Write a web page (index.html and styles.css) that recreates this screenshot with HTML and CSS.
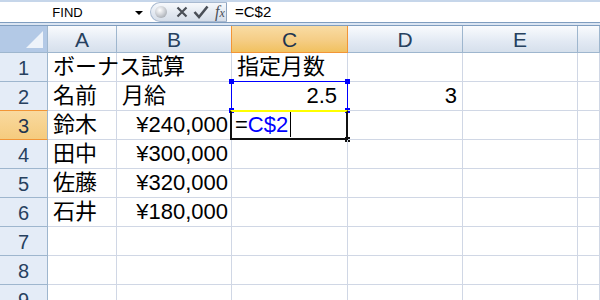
FILE: index.html
```html
<!DOCTYPE html>
<html lang="ja">
<head>
<meta charset="utf-8">
<title>ボーナス試算</title>
<link rel="stylesheet" href="styles.css">
</head>
<body>
<div class="app">
  <div class="topstrip"></div>
  <div class="fbar">
    <div class="namebox"><span class="name">FIND</span><span class="arrow"></span></div>
    <div class="pill">
      <span class="dot"></span>
      <svg class="ico" width="14" height="14" viewBox="0 0 14 14"><path d="M2.5 2.5 L11.5 11.5 M11.5 2.5 L2.5 11.5" stroke="#4a4f57" stroke-width="2.2" fill="none"/></svg>
      <svg class="ico" width="16" height="14" viewBox="0 0 16 14"><path d="M1.5 7 L6 12 L14.5 1.5" stroke="#4a4f57" stroke-width="2.6" fill="none"/></svg>
      <span class="fx">f<span class="fxx">x</span></span>
    </div>
    <div class="finput">=C$2</div>
  </div>
  <div class="fline"></div>
  <div class="fband"></div>
  <div class="fline"></div>

  <div class="sheet">
    <div class="corner"><span class="tri"></span></div>
    <div class="ch">A</div>
    <div class="ch">B</div>
    <div class="ch ch-sel">C</div>
    <div class="ch">D</div>
    <div class="ch">E</div>
    <div class="ch"></div>

    <div class="rh">1</div>
    <div class="c">ボーナス試算</div>
    <div class="c"></div>
    <div class="c">指定月数</div>
    <div class="c"></div>
    <div class="c"></div>
    <div class="c"></div>

    <div class="rh">2</div>
    <div class="c">名前</div>
    <div class="c">月給</div>
    <div class="c num c2">2.5<span class="rng"><i class="h tl"></i><i class="h tr"></i><i class="h bl"></i><i class="h br"></i></span></div>
    <div class="c num d2">3</div>
    <div class="c"></div>
    <div class="c"></div>

    <div class="rh rh-sel">3</div>
    <div class="c">鈴木</div>
    <div class="c num">¥240,000</div>
    <div class="c c3"><span class="eq">=</span><span class="ref">C$2</span><span class="caret"></span><span class="act"><i class="fill"></i></span></div>
    <div class="c"></div>
    <div class="c"></div>
    <div class="c"></div>

    <div class="rh">4</div>
    <div class="c">田中</div>
    <div class="c num">¥300,000</div>
    <div class="c"></div>
    <div class="c"></div>
    <div class="c"></div>
    <div class="c"></div>

    <div class="rh">5</div>
    <div class="c">佐藤</div>
    <div class="c num">¥320,000</div>
    <div class="c"></div>
    <div class="c"></div>
    <div class="c"></div>
    <div class="c"></div>

    <div class="rh">6</div>
    <div class="c">石井</div>
    <div class="c num">¥180,000</div>
    <div class="c"></div>
    <div class="c"></div>
    <div class="c"></div>
    <div class="c"></div>

    <div class="rh">7</div>
    <div class="c"></div><div class="c"></div><div class="c"></div><div class="c"></div><div class="c"></div><div class="c"></div>

    <div class="rh">8</div>
    <div class="c"></div><div class="c"></div><div class="c"></div><div class="c"></div><div class="c"></div><div class="c"></div>

    <div class="rh">9</div>
    <div class="c"></div><div class="c"></div><div class="c"></div><div class="c"></div><div class="c"></div><div class="c"></div>
  </div>
</div>
</body>
</html>
```
FILE: styles.css
```css
html, body {
  margin: 0;
  padding: 0;
  background: #ffffff;
  overflow: hidden;
}
.app {
  width: 600px;
  height: 300px;
  overflow: hidden;
  font-family: "Liberation Sans", "Noto Sans CJK JP", sans-serif;
}
.topstrip {
  height: 2px;
  background: #c6d6ea;
}
.fbar {
  height: 20px;
  display: flex;
  background: #ffffff;
}
.namebox {
  width: 148px;
  display: flex;
  align-items: center;
}
.name {
  flex: 1;
  text-align: center;
  font-size: 13px;
  color: #000;
}
.arrow {
  width: 0;
  height: 0;
  border-left: 4px solid transparent;
  border-right: 4px solid transparent;
  border-top: 4px solid #000;
  margin-right: 5px;
  margin-top: 2px;
}
.pill {
  width: 77px;
  margin-left: 2px;
  height: 20px;
  box-sizing: border-box;
  border: 1px solid #a9bad0;
  border-right: 1px solid #8ea4c0;
  border-radius: 10px 0 0 10px;
  background: linear-gradient(#f7f9fc, #e3e9f1 55%, #d6dee9);
  display: flex;
  align-items: center;
  padding-left: 4px;
}
.dot {
  width: 12px;
  height: 12px;
  border-radius: 50%;
  background: radial-gradient(circle at 40% 35%, #ffffff 0%, #cfd2d7 45%, #8e949c 100%);
  margin-right: 8px;
}
.ico {
  display: block;
  margin-right: 4px;
}
.fx {
  font-family: "Liberation Serif", serif;
  font-style: italic;
  font-size: 16px;
  color: #4a4f57;
  line-height: 1;
  margin-left: 2px;
}
.fxx {
  font-size: 12px;
}
.finput {
  flex: 1;
  font-size: 15px;
  padding-left: 8px;
  line-height: 20px;
  color: #000;
}
.fline {
  height: 1px;
  background: #7f9dbf;
}
.fband {
  height: 2px;
  background: #dbe5f2;
}

.sheet {
  display: grid;
  grid-template-columns: 48px 69px 115px 116px 115px 115px 22px;
  grid-template-rows: 27px repeat(9, 29px);
}
.corner {
  background: #b3c9e6;
  border-right: 1px solid #9eb6ce;
  border-bottom: 1px solid #9eb6ce;
  box-sizing: border-box;
  position: relative;
}
.tri {
  position: absolute;
  right: 4px;
  bottom: 4px;
  width: 0;
  height: 0;
  border-left: 17px solid transparent;
  border-bottom: 17px solid #eef3fa;
}
.ch {
  box-sizing: border-box;
  background: linear-gradient(#f9fbfd, #e2e9f3 60%, #d6e0ec);
  border-right: 1px solid #9eb6ce;
  border-bottom: 1px solid #9eb6ce;
  display: flex;
  align-items: center;
  justify-content: center;
  font-size: 21px;
  color: #27415f;
  padding-top: 2px;
}
.ch-sel {
  background: linear-gradient(#f9dca4, #f5cd85 55%, #f1c15f);
  border-left: 1px solid #f29536;
  border-right: 1px solid #f29536;
  border-bottom: 1px solid #f29536;
  margin-left: -1px;
  color: #1f3550;
}
.rh {
  box-sizing: border-box;
  background: #e4ecf7;
  border-right: 1px solid #9eb6ce;
  border-bottom: 1px solid #9eb6ce;
  display: flex;
  align-items: center;
  justify-content: center;
  font-size: 20px;
  color: #27415f;
  padding-top: 2px;
}
.rh-sel {
  background: linear-gradient(#f9d99f, #f5cb7e);
  border-bottom: 1px solid #f29536;
  border-top: 1px solid #f29536;
  margin-top: -1px;
  color: #1f3550;
}
.c {
  box-sizing: border-box;
  border-right: 1px solid #d0d7e5;
  border-bottom: 1px solid #d0d7e5;
  font-size: 22px;
  color: #000;
  white-space: nowrap;
  display: flex;
  align-items: flex-end;
  padding: 0 0 1px 5px;
  line-height: 26px;
  position: relative;
}
.num {
  justify-content: flex-end;
  padding-left: 0;
  padding-right: 3px;
}
.c2 {
  padding-right: 10px;
}
.d2 {
  padding-right: 5px;
}
.rng {
  position: absolute;
  left: -1px;
  top: -1px;
  right: -1px;
  bottom: -1px;
  border: 1px solid #0000ff;
  pointer-events: none;
}
.h {
  position: absolute;
  width: 5px;
  height: 5px;
  background: #0000ff;
}
.tl { left: -3px; top: -3px; }
.tr { right: -3px; top: -3px; }
.bl { left: -3px; bottom: -3px; }
.br { right: -3px; bottom: -3px; }

.c3 {
  padding-left: 3px;
}
.eq {
  color: #000;
}
.ref {
  color: #0000ff;
}
.caret {
  width: 1px;
  height: 25px;
  background: #000;
  margin-left: 2px;
  margin-bottom: 1px;
  align-self: flex-end;
}
.act {
  position: absolute;
  left: -2px;
  top: -1px;
  right: -1px;
  bottom: -1px;
  border: 2px solid #111;
  border-top: 2px solid #ffff00;
}
.fill {
  position: absolute;
  right: -4px;
  bottom: -4px;
  width: 5px;
  height: 5px;
  background: #111;
}
```
